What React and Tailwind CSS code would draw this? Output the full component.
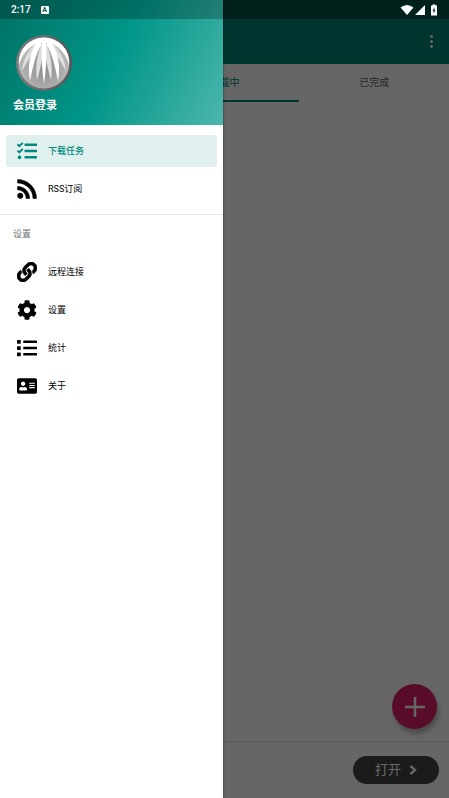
import React from "react";
import { FaTasks, FaLink, FaCog, FaList, FaAddressCard } from "react-icons/fa";

function RssIcon(props) {
  return (
    <svg viewBox="3.500 4 16.500 16.500" fill="currentColor" stroke="currentColor" strokeWidth="0.500" {...props}>
      <circle cx="6.180" cy="17.820" r="2.180" />
      <path d="M4 4.440v2.830c7.030 0 12.730 5.700 12.730 12.730h2.830c0-8.590-6.970-15.560-15.560-15.560zm0 5.660v2.830c3.900 0 7.070 3.170 7.070 7.070h2.830c0-5.470-4.430-9.900-9.900-9.900z" />
    </svg>
  );
}

function LinkIcon(props) {
  return <FaLink stroke="currentColor" strokeWidth="14" {...props} />;
}

const mainItems = [
  { label: "下载任务", Icon: FaTasks, active: true },
  { label: "RSS订阅", Icon: RssIcon },
];

const settingItems = [
  { label: "远程连接", Icon: LinkIcon },
  { label: "设置", Icon: FaCog },
  { label: "统计", Icon: FaList },
  { label: "关于", Icon: FaAddressCard },
];

const tabs = ["全部", "下载中", "已完成"];

function MenuItem({ label, Icon, active }) {
  return (
    <li>
      <button
        type="button"
        className={
          "flex h-8 w-full items-center gap-[11px] rounded-[3px] pl-[11px] text-left text-[9px] leading-3 " +
          (active ? "bg-[#e0f0ee] font-medium text-[#00897b]" : "text-black")
        }
      >
        <Icon className="size-5 shrink-0" aria-hidden="true" />
        <span>{label}</span>
      </button>
    </li>
  );
}

function Logo() {
  return (
    <svg viewBox="0 0 56 56" className="size-14" aria-hidden="true">
      <defs>
        <radialGradient id="ball" cx="50%" cy="62%" r="55%">
          <stop offset="0" stopColor="#8c8c8c" />
          <stop offset="1" stopColor="#bdbdbd" />
        </radialGradient>
        <linearGradient id="rim" x1="0" y1="0" x2="1" y2="0">
          <stop offset="0" stopColor="#7d7d7d" />
          <stop offset="1" stopColor="#555" />
        </linearGradient>
        <clipPath id="inner">
          <circle cx="28" cy="28" r="25.500" />
        </clipPath>
      </defs>
      <circle cx="28" cy="28" r="28" fill="url(#rim)" />
      <circle cx="28" cy="28" r="25.500" fill="url(#ball)" />
      <g clipPath="url(#inner)">
        <g fill="#dedede">
          <path d="M19 9C11 17 7 25 6 36C11 27 16 18 24 11Z" />
          <path d="M25 10C21 22 19 34 21 45C24 36 26 24 28 12Z" />
          <path d="M31 10C35 22 37 34 35 45C32 36 30 24 28 12Z" />
          <path d="M37 9C45 17 49 25 50 36C45 27 40 18 32 11Z" />
        </g>
        <g fill="#fff">
          <path d="M3 30C2 12 13 2 28 2S54 12 53 30C51 21 45 13 35 8H21C11 13 5 21 3 30Z" />
          <path d="M21 6C14 18 11 31 14 46C17 32 19 19 26 9Z" />
          <path d="M26 7C25 21 26 36 28 49C30 36 31 21 30 7Z" />
          <path d="M35 6C42 18 45 31 42 46C39 32 37 19 30 9Z" />
        </g>
      </g>
    </svg>
  );
}

function StatusIcons() {
  return (
    <svg viewBox="0 0 38 12" className="h-3 w-[38px]" fill="#fff" aria-hidden="true">
      <path d="M.5 3.500Q7-1.500 13.500 3.500L7 11Z" />
      <path d="M25 1V11H15Z" />
      <path
        fillRule="evenodd"
        d="M31 1.500H32.500V.5H35.500V1.500H37V11.500H31ZM34.500 3.500L32.500 6.500H33.500V9.500L35.500 6H34.500Z"
      />
    </svg>
  );
}

export default function App() {
  return (
    <div
      lang="zh-CN"
      className="relative flex min-h-screen flex-col bg-white font-['Roboto','Noto_Sans_CJK_SC',sans-serif]"
    >
      <div className="h-[19px] bg-[#006b60]" />
      <header className="flex h-[45px] items-center justify-end bg-[#008577] pr-3">
        <button type="button" aria-label="更多" className="flex h-8 w-3 flex-col items-center justify-center gap-[2px]">
          <span className="size-[3px] rounded-full bg-white" />
          <span className="size-[3px] rounded-full bg-white" />
          <span className="size-[3px] rounded-full bg-white" />
        </button>
      </header>
      <div role="tablist" className="grid h-[38px] grid-cols-3 text-[10px] leading-3">
        {tabs.map((tab) => (
          <button
            key={tab}
            type="button"
            role="tab"
            aria-selected={tab === "下载中"}
            className={
              "border-b-2 pt-[2px] " +
              (tab === "下载中" ? "border-[#008577] text-[#008577]" : "border-transparent text-[#666]")
            }
          >
            {tab}
          </button>
        ))}
      </div>
      <main className="flex flex-1 items-end justify-end pr-3 pb-3">
        <button
          type="button"
          aria-label="添加"
          className="flex size-[45px] items-center justify-center rounded-full bg-[#df2068] shadow-[2px_5px_4px_rgba(0,0,0,0.25)]"
        >
          <svg viewBox="0 0 20 20" className="size-5" fill="none" stroke="#fff" strokeWidth="2.500" aria-hidden="true">
            <path d="M10 0V20M0 10H20" />
          </svg>
        </button>
      </main>
      <footer className="flex h-[57px] items-center justify-end border-t border-[#dedede] pr-[10px]">
        <button
          type="button"
          className="flex h-7 w-[86px] items-center justify-center gap-2 rounded-full bg-[#454545] text-[13px] leading-4 text-white"
        >
          <span>打开</span>
          <svg viewBox="0 0 8 10" className="h-[10px] w-2" fill="none" stroke="currentColor" strokeWidth="2.400" aria-hidden="true">
            <path d="M1.500 1L6 5L1.500 9" />
          </svg>
        </button>
      </footer>

      <div className="absolute inset-0 bg-black/60" />

      <aside className="absolute inset-y-0 left-0 w-[223px] bg-white shadow-[0_0_2px_rgba(0,0,0,0.6)]">
        <div className="h-[125px] bg-[linear-gradient(117deg,#007265,#009688_50%,#4db6ac)] pt-[35px] pl-[13px]">
          <div className="pl-[3px]">
            <Logo />
          </div>
          <button type="button" className="mt-[7px] block text-[11px] leading-4 font-bold text-white">
            会员登录
          </button>
        </div>
        <nav aria-label="主菜单">
          <ul className="flex flex-col gap-[6px] border-b border-[#e6e6e6] px-[6px] pt-[10px] pb-[9px]">
            {mainItems.map((item) => (
              <MenuItem key={item.label} {...item} />
            ))}
          </ul>
          <h2 className="pt-3 pl-[13px] text-[9px] leading-[14px] text-[#777]">设置</h2>
          <ul className="flex flex-col gap-[6px] px-[6px] pt-[15px]">
            {settingItems.map((item) => (
              <MenuItem key={item.label} {...item} />
            ))}
          </ul>
        </nav>
      </aside>

      <div className="absolute inset-x-0 top-0 flex h-[19px] items-center justify-between bg-black/25 pr-[11px] pl-[11px] text-white">
        <div className="flex items-center gap-[10px]">
          <span className="text-[10px] leading-3 font-medium">2:17</span>
          <span className="flex size-2 items-center justify-center rounded-[1px] bg-white text-[7px] leading-[8px] font-bold text-[#00564c]">
            A
          </span>
        </div>
        <StatusIcons />
      </div>
    </div>
  );
}
